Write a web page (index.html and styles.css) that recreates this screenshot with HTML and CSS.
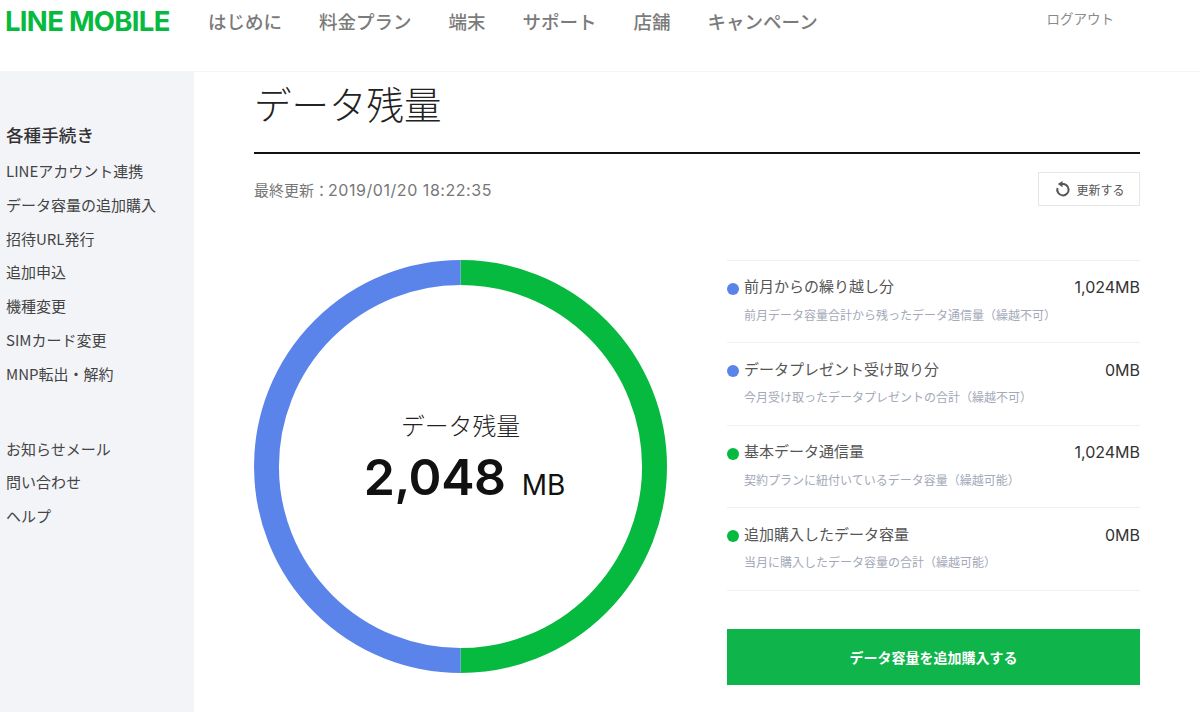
FILE: index.html
```html
<!DOCTYPE html>
<html lang="ja">
<head>
<meta charset="utf-8">
<title>データ残量</title>
<link rel="stylesheet" href="styles.css">
</head>
<body>
<header class="header">
  <div class="logo">LINE MOBILE</div>
  <nav class="gnav">
    <a>はじめに</a><a>料金プラン</a><a>端末</a><a>サポート</a><a>店舗</a><a>キャンペーン</a>
  </nav>
  <a class="logout">ログアウト</a>
</header>
<div class="body">
  <aside class="side">
    <h2 class="side-title">各種手続き</h2>
    <ul class="side-list">
      <li>LINEアカウント連携</li>
      <li>データ容量の追加購入</li>
      <li>招待URL発行</li>
      <li>追加申込</li>
      <li>機種変更</li>
      <li>SIMカード変更</li>
      <li>MNP転出・解約</li>
    </ul>
    <ul class="side-list second">
      <li>お知らせメール</li>
      <li>問い合わせ</li>
      <li>ヘルプ</li>
    </ul>
  </aside>
  <main class="main">
    <h1 class="title">データ残量</h1>
    <div class="update-row">
      <span class="updated">最終更新：<span class="stamp">2019/01/20 18:22:35</span></span>
      <button class="refresh">
        <svg class="refresh-icon" viewBox="0 0 16 16" width="16" height="16"><path d="M6.500 3.200A5.700 5.700 0 1 1 2.500 7" fill="none" stroke="#555" stroke-width="2"/><path d="M7.500 0V6.200L2.800 3.100Z" fill="#555"/></svg>
        更新する
      </button>
    </div>
    <div class="content">
      <div class="donut">
        <svg class="ring" viewBox="0 0 414 414" width="413" height="413">
          <path d="M207 12.5A194.500 194.500 0 0 1 207 401.500" fill="none" stroke="#06b93f" stroke-width="25"/>
          <path d="M207 401.500A194.500 194.500 0 0 1 207 12.500" fill="none" stroke="#5b84ea" stroke-width="25"/>
        </svg>
        <div class="donut-text">
          <div class="donut-label">データ残量</div>
          <div class="donut-value">2,048<span class="donut-unit">MB</span></div>
        </div>
      </div>
      <div class="detail">
        <ul class="items">
          <li class="item">
            <div class="item-head"><span class="dot blue"></span><span class="item-name">前月からの繰り越し分</span><span class="item-val">1,024MB</span></div>
            <p class="item-note">前月データ容量合計から残ったデータ通信量（繰越不可）</p>
          </li>
          <li class="item">
            <div class="item-head"><span class="dot blue"></span><span class="item-name">データプレゼント受け取り分</span><span class="item-val">0MB</span></div>
            <p class="item-note">今月受け取ったデータプレゼントの合計（繰越不可）</p>
          </li>
          <li class="item">
            <div class="item-head"><span class="dot green"></span><span class="item-name">基本データ通信量</span><span class="item-val">1,024MB</span></div>
            <p class="item-note">契約プランに紐付いているデータ容量（繰越可能）</p>
          </li>
          <li class="item">
            <div class="item-head"><span class="dot green"></span><span class="item-name">追加購入したデータ容量</span><span class="item-val">0MB</span></div>
            <p class="item-note">当月に購入したデータ容量の合計（繰越可能）</p>
          </li>
        </ul>
        <a class="buy">データ容量を追加購入する</a>
      </div>
    </div>
  </main>
</div>
</body>
</html>
```
FILE: styles.css
```css
* { box-sizing: border-box; }
html, body { margin: 0; padding: 0; }
body {
  width: 1200px;
  height: 712px;
  overflow: hidden;
  background: #fff;
  font-family: "Inter", "Noto Sans CJK JP", sans-serif;
  color: #333;
}
.header {
  height: 72px;
  display: flex;
  align-items: flex-start;
  border-bottom: 1px solid #f3f4f6;
  padding-left: 5px;
}
.logo {
  width: 203px;
  font-family: "Inter", sans-serif;
  font-weight: 700;
  font-size: 27.500px;
  line-height: 43px;
  letter-spacing: -0.7px;
  color: #06b93f;
}
.gnav { display: flex; gap: 37px; }
.gnav a {
  font-family: "Noto Sans CJK JP", sans-serif;
  font-size: 18.500px;
  font-weight: 500;
  line-height: 42px;
  color: #7b7b7b;
}
.logout {
  margin-left: auto;
  margin-right: 86px;
  font-family: "Noto Sans CJK JP", sans-serif;
  font-size: 13.500px;
  line-height: 37px;
  color: #8a8a8a;
}
.body { display: flex; height: 640px; }
.side {
  width: 194px;
  flex: none;
  background: #f3f4f8;
  padding: 48px 0 0 6px;
  font-family: "Noto Sans CJK JP", sans-serif;
}
.side-title {
  margin: 0 0 4px;
  font-size: 17.600px;
  font-weight: 500;
  line-height: 30px;
  color: #333;
}
.side-list { list-style: none; margin: 0; padding: 0; }
.side-list li {
  font-size: 15px;
  line-height: 33.800px;
  color: #444;
  white-space: nowrap;
}
.side-list.second { margin-top: 41px; }
.main {
  width: 946px;
  padding: 0 0 0 60px;
  font-family: "Noto Sans CJK JP", sans-serif;
}
.title {
  margin: 0;
  height: 82px;
  border-bottom: 2px solid #111;
  font-size: 37.500px;
  font-weight: 300;
  line-height: 62px;
  color: #222;
}
.update-row {
  display: flex;
  justify-content: space-between;
  align-items: center;
  margin-top: 18px;
}
.updated { font-size: 15px; color: #777; }
.stamp { font-family: "Inter", sans-serif; font-size: 16px; letter-spacing: 0.55px; margin-left: -1px; }
.refresh {
  width: 102px;
  height: 34px;
  display: flex;
  align-items: center;
  justify-content: center;
  gap: 5px;
  background: #fff;
  border: 1px solid #e6e6e6;
  font-family: "Noto Sans CJK JP", sans-serif;
  font-size: 12px;
  color: #555;
  padding: 0 0 0 2px;
}
.content {
  display: flex;
  justify-content: space-between;
  margin-top: 54px;
}
.donut {
  position: relative;
  width: 413px;
  height: 413px;
}
.ring { display: block; }
.donut-text {
  position: absolute;
  inset: 0;
  display: flex;
  flex-direction: column;
  align-items: center;
  padding-top: 147px;
}
.donut-label { font-size: 23.800px; font-weight: 300; line-height: 36px; color: #222; }
.donut-value {
  font-family: "Inter", sans-serif;
  font-size: 50px;
  font-weight: 600;
  line-height: 69px;
  letter-spacing: -0.4px;
  color: #111;
  padding-left: 8px;
}
.donut-unit { font-size: 28px; font-weight: 400; margin-left: 16px; letter-spacing: 0; }
.detail { width: 413px; }
.items { list-style: none; margin: -0.5px 0 0; padding: 0; border-top: 1px solid #f0f1f4; }
.item {
  height: 82.500px;
  border-bottom: 1px solid #f0f1f4;
  padding-top: 13px;
}
.item-head { display: flex; align-items: center; height: 26px; }
.dot { width: 12px; height: 12px; border-radius: 50%; margin-top: 4px; margin-right: 5px; flex: none; }
.blue { background: #5b84ea; }
.green { background: #06b93f; }
.item-name { font-size: 15px; color: #555; padding-bottom: 2px; }
.item-val {
  margin-left: auto;
  font-family: "Inter", sans-serif;
  font-size: 16px;
  font-weight: 400;
  color: #333;
  padding-top: 1px;
}
.item-note {
  margin: 5px 0 0 17px;
  font-size: 12px;
  line-height: 20px;
  color: #a3a9b8;
}
.buy {
  display: block;
  margin-top: 38.500px;
  height: 56px;
  background: #0fb44a;
  color: #fff;
  text-align: center;
  font-size: 14px;
  font-weight: 700;
  line-height: 56px;
}
```
